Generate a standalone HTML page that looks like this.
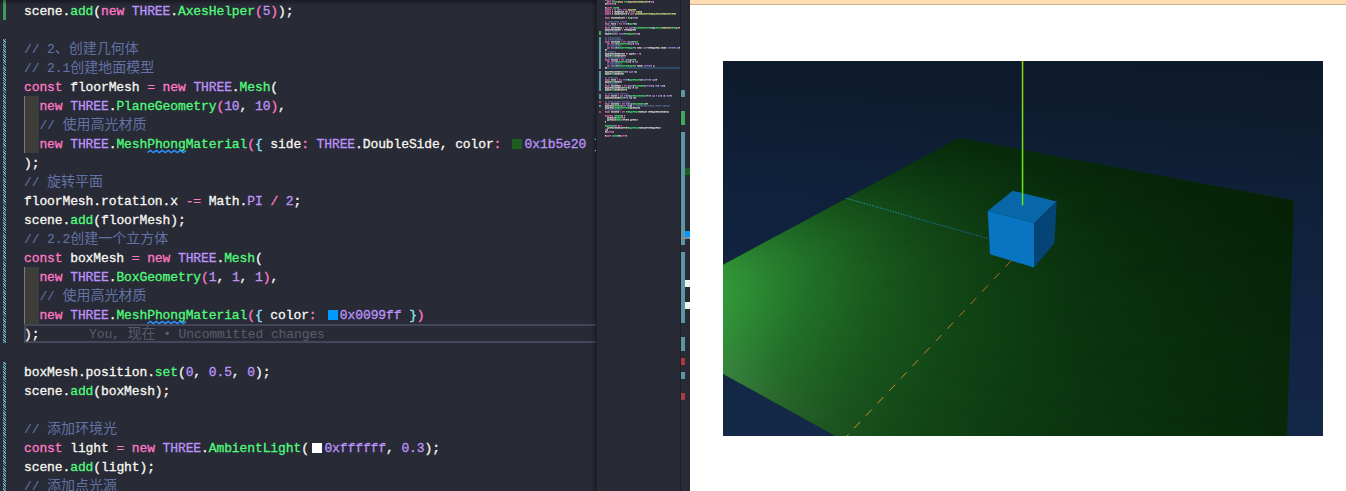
<!DOCTYPE html>
<html lang="zh-CN">
<head>
<meta charset="utf-8">
<title>three.js demo</title>
<style>
html,body{margin:0;padding:0;background:#fff;}
body{width:1346px;height:491px;overflow:hidden;position:relative;}
#ed{position:absolute;left:0;top:0;width:690px;height:491px;background:#282a36;overflow:hidden;}
#code{position:absolute;left:0;top:0;width:596px;height:491px;overflow:hidden;}
.ln{position:absolute;left:24px;height:19px;line-height:19px;white-space:pre;
  font-family:"Liberation Mono","Noto Sans CJK SC",monospace;font-size:13px;letter-spacing:-0.105px;color:#f8f8f2;-webkit-text-stroke:0.3px;}
.z{font-family:"Liberation Mono","Noto Sans CJK SC",monospace;font-size:14px;letter-spacing:0;line-height:0;-webkit-text-stroke:0;}
.w{color:#f8f8f2}.k{color:#ff79c6}.p{color:#bd93f9}.g{color:#50fa7b}.c{color:#6272a4;-webkit-text-stroke:0.12px}.y{color:#f1fa8c}.b{color:#8be9fd}
.sw{display:inline-block;width:10px;height:10px;margin:0 2.3px 0 3.3px;vertical-align:-1px;}
.sq{position:relative}.sq svg{position:absolute;left:0;top:13px;overflow:visible}
.bl{position:absolute;top:0;color:#5a5b67;-webkit-text-stroke:0.1px}
.abs{position:absolute;}
#scene{position:absolute;left:723px;top:61px;width:600px;height:375px;}
</style>
</head>
<body>
<div id="ed">
  <div id="code">
    <!-- indent-rainbow blocks -->
    <div class="abs" style="left:24px;top:96px;width:15px;height:57px;background:#3d3e39;border-left:1px solid #7d7c6c;box-sizing:border-box"></div>
    <div class="abs" style="left:24px;top:267px;width:15px;height:57px;background:#3d3e39;border-left:1px solid #7d7c6c;box-sizing:border-box"></div>
    <!-- current line -->
    <div class="abs" style="left:24px;top:324px;width:580px;height:19px;border:2px solid #44475a;box-sizing:border-box"></div>
    <!-- git gutter -->
    <div class="abs" style="left:3px;top:0;width:3px;height:20px;background:#3e9b57"></div>
    <div class="abs" style="left:0;top:0;width:596px;height:5px;background:linear-gradient(to bottom,rgba(0,0,0,.38),rgba(0,0,0,0))"></div>
    <div class="abs" style="left:3px;top:39px;width:3px;height:304px;background:repeating-linear-gradient(45deg,#66aebb 0 1.05px,#2d3a46 1.05px 1.8px)"></div>
    <div class="abs" style="left:3px;top:362px;width:3px;height:130px;background:repeating-linear-gradient(45deg,#66aebb 0 1.05px,#2d3a46 1.05px 1.8px)"></div>
<div class="ln" style="top:2px"><span class="w">scene</span><span class="w">.</span><span class="g">add</span><span class="w">(</span><span class="k">new</span> <span class="p">THREE</span><span class="w">.</span><span class="g">AxesHelper</span><span class="k">(</span><span class="p">5</span><span class="k">)</span><span class="w">)</span><span class="w">;</span></div>
<div class="ln" style="top:21px"></div>
<div class="ln" style="top:40px"><span class="c">// 2<span class="z">、创建几何体</span></span></div>
<div class="ln" style="top:59px"><span class="c">// 2.1<span class="z">创建地面模型</span></span></div>
<div class="ln" style="top:78px"><span class="k">const</span> <span class="w">floorMesh</span> <span class="k">=</span> <span class="k">new</span> <span class="p">THREE</span><span class="w">.</span><span class="g">Mesh</span><span class="w">(</span></div>
<div class="ln" style="top:97px">  <span class="k">new</span> <span class="p">THREE</span><span class="w">.</span><span class="g">PlaneGeometry</span><span class="k">(</span><span class="p">10</span><span class="w">,</span> <span class="p">10</span><span class="k">)</span><span class="w">,</span></div>
<div class="ln" style="top:116px">  <span class="c">// <span class="z">使用高光材质</span></span></div>
<div class="ln" style="top:135px">  <span class="k">new</span> <span class="p">THREE</span><span class="w">.</span><span class="g">Mesh<span class="sq">Phong<svg width="39" height="3" viewBox="0 0 39 3"><polyline points="0.3,2.6 3.3,0.4 6.3,2.6 9.3,0.4 12.3,2.6 15.3,0.4 18.3,2.6 21.3,0.4 24.3,2.6 27.3,0.4 30.3,2.6 33.3,0.4 36.3,2.6 39.3,0.4" fill="none" stroke="#2b96ff" stroke-width="1.25"/></svg></span>Material</span><span class="k">(</span><span class="b">{</span> <span class="w">side</span><span class="k">:</span> <span class="p">THREE</span><span class="w">.</span><span class="w">DoubleSide</span><span class="w">,</span> <span class="w">color</span><span class="k">:</span> <i class="sw" style="background:#1b5e20"></i><span class="p">0x1b5e20</span> <span class="b">}</span><span class="k">)</span><span class="w">,</span></div>
<div class="ln" style="top:154px"><span class="w">)</span><span class="w">;</span></div>
<div class="ln" style="top:173px"><span class="c">// <span class="z">旋转平面</span></span></div>
<div class="ln" style="top:192px"><span class="w">floorMesh</span><span class="w">.</span><span class="w">rotation</span><span class="w">.</span><span class="w">x</span> <span class="k">-=</span> <span class="w">Math</span><span class="w">.</span><span class="p">PI</span> <span class="k">/</span> <span class="p">2</span><span class="w">;</span></div>
<div class="ln" style="top:211px"><span class="w">scene</span><span class="w">.</span><span class="g">add</span><span class="w">(</span><span class="w">floorMesh</span><span class="w">)</span><span class="w">;</span></div>
<div class="ln" style="top:230px"><span class="c">// 2.2<span class="z">创建一个立方体</span></span></div>
<div class="ln" style="top:249px"><span class="k">const</span> <span class="w">boxMesh</span> <span class="k">=</span> <span class="k">new</span> <span class="p">THREE</span><span class="w">.</span><span class="g">Mesh</span><span class="w">(</span></div>
<div class="ln" style="top:268px">  <span class="k">new</span> <span class="p">THREE</span><span class="w">.</span><span class="g">BoxGeometry</span><span class="k">(</span><span class="p">1</span><span class="w">,</span> <span class="p">1</span><span class="w">,</span> <span class="p">1</span><span class="k">)</span><span class="w">,</span></div>
<div class="ln" style="top:287px">  <span class="c">// <span class="z">使用高光材质</span></span></div>
<div class="ln" style="top:306px">  <span class="k">new</span> <span class="p">THREE</span><span class="w">.</span><span class="g">Mesh<span class="sq">Phong<svg width="39" height="3" viewBox="0 0 39 3"><polyline points="0.3,2.6 3.3,0.4 6.3,2.6 9.3,0.4 12.3,2.6 15.3,0.4 18.3,2.6 21.3,0.4 24.3,2.6 27.3,0.4 30.3,2.6 33.3,0.4 36.3,2.6 39.3,0.4" fill="none" stroke="#2b96ff" stroke-width="1.25"/></svg></span>Material</span><span class="k">(</span><span class="b">{</span> <span class="w">color</span><span class="k">:</span> <i class="sw" style="background:#0099ff"></i><span class="p">0x0099ff</span> <span class="b">}</span><span class="k">)</span></div>
<div class="ln" style="top:325px"><span class="w">)</span><span class="w">;</span><span class="bl" style="left:65.0px">You, <span class="z">现在</span> • Uncommitted changes</span></div>
<div class="ln" style="top:344px"></div>
<div class="ln" style="top:363px"><span class="w">boxMesh</span><span class="w">.</span><span class="w">position</span><span class="w">.</span><span class="g">set</span><span class="w">(</span><span class="p">0</span><span class="w">,</span> <span class="p">0.5</span><span class="w">,</span> <span class="p">0</span><span class="w">)</span><span class="w">;</span></div>
<div class="ln" style="top:382px"><span class="w">scene</span><span class="w">.</span><span class="g">add</span><span class="w">(</span><span class="w">boxMesh</span><span class="w">)</span><span class="w">;</span></div>
<div class="ln" style="top:401px"></div>
<div class="ln" style="top:420px"><span class="c">// <span class="z">添加环境光</span></span></div>
<div class="ln" style="top:439px"><span class="k">const</span> <span class="w">light</span> <span class="k">=</span> <span class="k">new</span> <span class="p">THREE</span><span class="w">.</span><span class="g">AmbientLight</span><span class="w">(</span><i class="sw" style="background:#ffffff"></i><span class="p">0xffffff</span><span class="w">,</span> <span class="p">0.3</span><span class="w">)</span><span class="w">;</span></div>
<div class="ln" style="top:458px"><span class="w">scene</span><span class="w">.</span><span class="g">add</span><span class="w">(</span><span class="w">light</span><span class="w">)</span><span class="w">;</span></div>
<div class="ln" style="top:477px"><span class="c">// <span class="z">添加点光源</span></span></div>
  </div>
  <!-- minimap -->
  <div class="abs" style="left:591px;top:0;width:6px;height:491px;background:linear-gradient(to right,rgba(0,0,0,0),rgba(0,0,0,.32))"></div>
  <div class="abs" style="left:605px;top:67px;width:75px;height:2px;background:#2f4a63"></div>
  <svg class="abs" style="left:597px;top:0" width="83" height="491" viewBox="0 0 83 491" shape-rendering="crispEdges">
    <defs><pattern id="mp" width="23" height="2" patternUnits="userSpaceOnUse"><rect x="0" y="0" width="1" height="1" fill="#717171"/><rect x="0" y="1" width="1" height="1" fill="#9d9d9d"/><rect x="1" y="0" width="1" height="1" fill="#979797"/><rect x="1" y="1" width="1" height="1" fill="#949494"/><rect x="2" y="0" width="1" height="1" fill="#898989"/><rect x="2" y="1" width="1" height="1" fill="#b6b6b6"/><rect x="3" y="0" width="1" height="1" fill="#535353"/><rect x="3" y="1" width="1" height="1" fill="#c6c6c6"/><rect x="4" y="0" width="1" height="1" fill="#505050"/><rect x="4" y="1" width="1" height="1" fill="#bebebe"/><rect x="5" y="0" width="1" height="1" fill="#545454"/><rect x="5" y="1" width="1" height="1" fill="#969696"/><rect x="6" y="0" width="1" height="1" fill="#7d7d7d"/><rect x="6" y="1" width="1" height="1" fill="#ebebeb"/><rect x="7" y="0" width="1" height="1" fill="#5a5a5a"/><rect x="7" y="1" width="1" height="1" fill="#a5a5a5"/><rect x="8" y="0" width="1" height="1" fill="#949494"/><rect x="8" y="1" width="1" height="1" fill="#f8f8f8"/><rect x="9" y="0" width="1" height="1" fill="#8e8e8e"/><rect x="9" y="1" width="1" height="1" fill="#b9b9b9"/><rect x="10" y="0" width="1" height="1" fill="#bcbcbc"/><rect x="10" y="1" width="1" height="1" fill="#919191"/><rect x="11" y="0" width="1" height="1" fill="#afafaf"/><rect x="11" y="1" width="1" height="1" fill="#adadad"/><rect x="12" y="0" width="1" height="1" fill="#5d5d5d"/><rect x="12" y="1" width="1" height="1" fill="#999999"/><rect x="13" y="0" width="1" height="1" fill="#6f6f6f"/><rect x="13" y="1" width="1" height="1" fill="#e9e9e9"/><rect x="14" y="0" width="1" height="1" fill="#616161"/><rect x="14" y="1" width="1" height="1" fill="#cecece"/><rect x="15" y="0" width="1" height="1" fill="#959595"/><rect x="15" y="1" width="1" height="1" fill="#b6b6b6"/><rect x="16" y="0" width="1" height="1" fill="#8b8b8b"/><rect x="16" y="1" width="1" height="1" fill="#939393"/><rect x="17" y="0" width="1" height="1" fill="#535353"/><rect x="17" y="1" width="1" height="1" fill="#a3a3a3"/><rect x="18" y="0" width="1" height="1" fill="#9a9a9a"/><rect x="18" y="1" width="1" height="1" fill="#bdbdbd"/><rect x="19" y="0" width="1" height="1" fill="#707070"/><rect x="19" y="1" width="1" height="1" fill="#cfcfcf"/><rect x="20" y="0" width="1" height="1" fill="#808080"/><rect x="20" y="1" width="1" height="1" fill="#aeaeae"/><rect x="21" y="0" width="1" height="1" fill="#a7a7a7"/><rect x="21" y="1" width="1" height="1" fill="#dcdcdc"/><rect x="22" y="0" width="1" height="1" fill="#686868"/><rect x="22" y="1" width="1" height="1" fill="#cecece"/></pattern><mask id="mk"><rect width="83" height="491" fill="url(#mp)"/></mask></defs><g mask="url(#mk)" opacity="0.8"><rect x="8" y="-1" width="1" height="2" fill="#f8f8f2"/><rect x="9" y="-1" width="8" height="2" fill="#ff79c6"/><rect x="17" y="-1" width="1" height="2" fill="#f8f8f2"/><rect x="10" y="1" width="1" height="2" fill="#f8f8f2"/><rect x="11" y="1" width="3" height="2" fill="#ff79c6"/><rect x="15" y="1" width="5" height="2" fill="#50fa7b"/><rect x="20" y="1" width="1" height="2" fill="#ff79c6"/><rect x="21" y="1" width="5" height="2" fill="#f1fa8c"/><rect x="27" y="1" width="3" height="2" fill="#50fa7b"/><rect x="30" y="1" width="1" height="2" fill="#ff79c6"/><rect x="31" y="1" width="19" height="2" fill="#f1fa8c"/><rect x="50" y="1" width="3" height="2" fill="#f8f8f2"/><rect x="53" y="1" width="3" height="2" fill="#ff79c6"/><rect x="56" y="1" width="1" height="2" fill="#f8f8f2"/><rect x="8" y="3" width="2" height="2" fill="#f8f8f2"/><rect x="10" y="3" width="8" height="2" fill="#ff79c6"/><rect x="18" y="3" width="1" height="2" fill="#f8f8f2"/><rect x="8" y="7" width="1" height="2" fill="#f8f8f2"/><rect x="9" y="7" width="6" height="2" fill="#ff79c6"/><rect x="16" y="7" width="5" height="2" fill="#50fa7b"/><rect x="21" y="7" width="1" height="2" fill="#f8f8f2"/><rect x="8" y="9" width="6" height="2" fill="#ff79c6"/><rect x="15" y="9" width="1" height="2" fill="#ff79c6"/><rect x="17" y="9" width="2" height="2" fill="#ff79c6"/><rect x="20" y="9" width="5" height="2" fill="#bd93f9"/><rect x="26" y="9" width="4" height="2" fill="#ff79c6"/><rect x="31" y="9" width="7" height="2" fill="#f1fa8c"/><rect x="38" y="9" width="1" height="2" fill="#f8f8f2"/><rect x="8" y="11" width="6" height="2" fill="#ff79c6"/><rect x="15" y="11" width="1" height="2" fill="#f8f8f2"/><rect x="17" y="11" width="10" height="2" fill="#f8f8f2"/><rect x="28" y="11" width="3" height="2" fill="#f8f8f2"/><rect x="32" y="11" width="1" height="2" fill="#f8f8f2"/><rect x="34" y="11" width="4" height="2" fill="#ff79c6"/><rect x="39" y="11" width="5" height="2" fill="#f1fa8c"/><rect x="44" y="11" width="1" height="2" fill="#f8f8f2"/><rect x="8" y="13" width="6" height="2" fill="#ff79c6"/><rect x="15" y="13" width="1" height="2" fill="#f8f8f2"/><rect x="17" y="13" width="13" height="2" fill="#f8f8f2"/><rect x="31" y="13" width="1" height="2" fill="#f8f8f2"/><rect x="33" y="13" width="4" height="2" fill="#ff79c6"/><rect x="38" y="13" width="40" height="2" fill="#f1fa8c"/><rect x="78" y="13" width="1" height="2" fill="#f8f8f2"/><rect x="8" y="17" width="5" height="2" fill="#ff79c6"/><rect x="14" y="17" width="14" height="2" fill="#f8f8f2"/><rect x="29" y="17" width="1" height="2" fill="#ff79c6"/><rect x="31" y="17" width="3" height="2" fill="#50fa7b"/><rect x="34" y="17" width="1" height="2" fill="#f8f8f2"/><rect x="35" y="17" width="4" height="2" fill="#bd93f9"/><rect x="39" y="17" width="2" height="2" fill="#f8f8f2"/><rect x="8" y="21" width="2" height="2" fill="#6272a4"/><rect x="11" y="21" width="11" height="2" fill="#6272a4"/><rect x="23" y="21" width="7" height="2" fill="#6272a4"/><rect x="8" y="23" width="5" height="2" fill="#ff79c6"/><rect x="14" y="23" width="5" height="2" fill="#f8f8f2"/><rect x="20" y="23" width="1" height="2" fill="#ff79c6"/><rect x="22" y="23" width="3" height="2" fill="#ff79c6"/><rect x="26" y="23" width="5" height="2" fill="#bd93f9"/><rect x="31" y="23" width="1" height="2" fill="#f8f8f2"/><rect x="32" y="23" width="5" height="2" fill="#50fa7b"/><rect x="37" y="23" width="3" height="2" fill="#f8f8f2"/><rect x="8" y="25" width="2" height="2" fill="#6272a4"/><rect x="11" y="25" width="3" height="2" fill="#6272a4"/><rect x="15" y="25" width="4" height="2" fill="#6272a4"/><rect x="8" y="27" width="5" height="2" fill="#ff79c6"/><rect x="14" y="27" width="11" height="2" fill="#f8f8f2"/><rect x="26" y="27" width="1" height="2" fill="#ff79c6"/><rect x="28" y="27" width="3" height="2" fill="#ff79c6"/><rect x="32" y="27" width="5" height="2" fill="#bd93f9"/><rect x="37" y="27" width="1" height="2" fill="#f8f8f2"/><rect x="38" y="27" width="17" height="2" fill="#50fa7b"/><rect x="55" y="27" width="3" height="2" fill="#f8f8f2"/><rect x="58" y="27" width="7" height="2" fill="#50fa7b"/><rect x="65" y="27" width="1" height="2" fill="#f8f8f2"/><rect x="66" y="27" width="7" height="2" fill="#f1fa8c"/><rect x="73" y="27" width="2" height="2" fill="#f8f8f2"/><rect x="75" y="27" width="4" height="2" fill="#50fa7b"/><rect x="79" y="27" width="1" height="2" fill="#f8f8f2"/><rect x="80" y="27" width="1" height="2" fill="#ff79c6"/><rect x="81" y="27" width="2" height="2" fill="#f1fa8c"/><rect x="8" y="29" width="16" height="2" fill="#f8f8f2"/><rect x="25" y="29" width="1" height="2" fill="#ff79c6"/><rect x="27" y="29" width="12" height="2" fill="#f8f8f2"/><rect x="8" y="31" width="2" height="2" fill="#6272a4"/><rect x="11" y="31" width="3" height="2" fill="#6272a4"/><rect x="15" y="31" width="6" height="2" fill="#6272a4"/><rect x="8" y="33" width="6" height="2" fill="#f8f8f2"/><rect x="14" y="33" width="3" height="2" fill="#50fa7b"/><rect x="17" y="33" width="1" height="2" fill="#f8f8f2"/><rect x="18" y="33" width="3" height="2" fill="#ff79c6"/><rect x="22" y="33" width="5" height="2" fill="#bd93f9"/><rect x="27" y="33" width="1" height="2" fill="#f8f8f2"/><rect x="28" y="33" width="10" height="2" fill="#50fa7b"/><rect x="38" y="33" width="1" height="2" fill="#ff79c6"/><rect x="39" y="33" width="1" height="2" fill="#bd93f9"/><rect x="40" y="33" width="1" height="2" fill="#ff79c6"/><rect x="41" y="33" width="2" height="2" fill="#f8f8f2"/><rect x="8" y="37" width="2" height="2" fill="#6272a4"/><rect x="11" y="37" width="13" height="2" fill="#6272a4"/><rect x="8" y="39" width="2" height="2" fill="#6272a4"/><rect x="11" y="39" width="15" height="2" fill="#6272a4"/><rect x="8" y="41" width="5" height="2" fill="#ff79c6"/><rect x="14" y="41" width="9" height="2" fill="#f8f8f2"/><rect x="24" y="41" width="1" height="2" fill="#ff79c6"/><rect x="26" y="41" width="3" height="2" fill="#ff79c6"/><rect x="30" y="41" width="5" height="2" fill="#bd93f9"/><rect x="35" y="41" width="1" height="2" fill="#f8f8f2"/><rect x="36" y="41" width="4" height="2" fill="#50fa7b"/><rect x="40" y="41" width="1" height="2" fill="#f8f8f2"/><rect x="10" y="43" width="3" height="2" fill="#ff79c6"/><rect x="14" y="43" width="5" height="2" fill="#bd93f9"/><rect x="19" y="43" width="1" height="2" fill="#f8f8f2"/><rect x="20" y="43" width="13" height="2" fill="#50fa7b"/><rect x="33" y="43" width="1" height="2" fill="#ff79c6"/><rect x="34" y="43" width="2" height="2" fill="#bd93f9"/><rect x="36" y="43" width="1" height="2" fill="#f8f8f2"/><rect x="38" y="43" width="2" height="2" fill="#bd93f9"/><rect x="40" y="43" width="1" height="2" fill="#ff79c6"/><rect x="41" y="43" width="1" height="2" fill="#f8f8f2"/><rect x="10" y="45" width="2" height="2" fill="#6272a4"/><rect x="13" y="45" width="12" height="2" fill="#6272a4"/><rect x="10" y="47" width="3" height="2" fill="#ff79c6"/><rect x="14" y="47" width="5" height="2" fill="#bd93f9"/><rect x="19" y="47" width="1" height="2" fill="#f8f8f2"/><rect x="20" y="47" width="17" height="2" fill="#50fa7b"/><rect x="37" y="47" width="1" height="2" fill="#ff79c6"/><rect x="38" y="47" width="1" height="2" fill="#8be9fd"/><rect x="40" y="47" width="4" height="2" fill="#f8f8f2"/><rect x="44" y="47" width="1" height="2" fill="#ff79c6"/><rect x="46" y="47" width="5" height="2" fill="#bd93f9"/><rect x="51" y="47" width="12" height="2" fill="#f8f8f2"/><rect x="64" y="47" width="5" height="2" fill="#f8f8f2"/><rect x="69" y="47" width="1" height="2" fill="#ff79c6"/><rect x="71" y="47" width="8" height="2" fill="#bd93f9"/><rect x="80" y="47" width="1" height="2" fill="#8be9fd"/><rect x="81" y="47" width="1" height="2" fill="#ff79c6"/><rect x="82" y="47" width="1" height="2" fill="#f8f8f2"/><rect x="8" y="49" width="2" height="2" fill="#f8f8f2"/><rect x="8" y="51" width="2" height="2" fill="#6272a4"/><rect x="11" y="51" width="8" height="2" fill="#6272a4"/><rect x="8" y="53" width="20" height="2" fill="#f8f8f2"/><rect x="29" y="53" width="2" height="2" fill="#ff79c6"/><rect x="32" y="53" width="5" height="2" fill="#f8f8f2"/><rect x="37" y="53" width="2" height="2" fill="#bd93f9"/><rect x="40" y="53" width="1" height="2" fill="#ff79c6"/><rect x="42" y="53" width="1" height="2" fill="#bd93f9"/><rect x="43" y="53" width="1" height="2" fill="#f8f8f2"/><rect x="8" y="55" width="6" height="2" fill="#f8f8f2"/><rect x="14" y="55" width="3" height="2" fill="#50fa7b"/><rect x="17" y="55" width="12" height="2" fill="#f8f8f2"/><rect x="8" y="57" width="2" height="2" fill="#6272a4"/><rect x="11" y="57" width="17" height="2" fill="#6272a4"/><rect x="8" y="59" width="5" height="2" fill="#ff79c6"/><rect x="14" y="59" width="7" height="2" fill="#f8f8f2"/><rect x="22" y="59" width="1" height="2" fill="#ff79c6"/><rect x="24" y="59" width="3" height="2" fill="#ff79c6"/><rect x="28" y="59" width="5" height="2" fill="#bd93f9"/><rect x="33" y="59" width="1" height="2" fill="#f8f8f2"/><rect x="34" y="59" width="4" height="2" fill="#50fa7b"/><rect x="38" y="59" width="1" height="2" fill="#f8f8f2"/><rect x="10" y="61" width="3" height="2" fill="#ff79c6"/><rect x="14" y="61" width="5" height="2" fill="#bd93f9"/><rect x="19" y="61" width="1" height="2" fill="#f8f8f2"/><rect x="20" y="61" width="11" height="2" fill="#50fa7b"/><rect x="31" y="61" width="1" height="2" fill="#ff79c6"/><rect x="32" y="61" width="1" height="2" fill="#bd93f9"/><rect x="33" y="61" width="1" height="2" fill="#f8f8f2"/><rect x="35" y="61" width="1" height="2" fill="#bd93f9"/><rect x="36" y="61" width="1" height="2" fill="#f8f8f2"/><rect x="38" y="61" width="1" height="2" fill="#bd93f9"/><rect x="39" y="61" width="1" height="2" fill="#ff79c6"/><rect x="40" y="61" width="1" height="2" fill="#f8f8f2"/><rect x="10" y="63" width="2" height="2" fill="#6272a4"/><rect x="13" y="63" width="12" height="2" fill="#6272a4"/><rect x="10" y="65" width="3" height="2" fill="#ff79c6"/><rect x="14" y="65" width="5" height="2" fill="#bd93f9"/><rect x="19" y="65" width="1" height="2" fill="#f8f8f2"/><rect x="20" y="65" width="17" height="2" fill="#50fa7b"/><rect x="37" y="65" width="1" height="2" fill="#ff79c6"/><rect x="38" y="65" width="1" height="2" fill="#8be9fd"/><rect x="40" y="65" width="5" height="2" fill="#f8f8f2"/><rect x="45" y="65" width="1" height="2" fill="#ff79c6"/><rect x="47" y="65" width="8" height="2" fill="#bd93f9"/><rect x="56" y="65" width="1" height="2" fill="#8be9fd"/><rect x="57" y="65" width="1" height="2" fill="#ff79c6"/><rect x="8" y="67" width="2" height="2" fill="#f8f8f2"/><rect x="8" y="71" width="17" height="2" fill="#f8f8f2"/><rect x="25" y="71" width="3" height="2" fill="#50fa7b"/><rect x="28" y="71" width="1" height="2" fill="#f8f8f2"/><rect x="29" y="71" width="1" height="2" fill="#bd93f9"/><rect x="30" y="71" width="1" height="2" fill="#f8f8f2"/><rect x="32" y="71" width="3" height="2" fill="#bd93f9"/><rect x="35" y="71" width="1" height="2" fill="#f8f8f2"/><rect x="37" y="71" width="1" height="2" fill="#bd93f9"/><rect x="38" y="71" width="2" height="2" fill="#f8f8f2"/><rect x="8" y="73" width="6" height="2" fill="#f8f8f2"/><rect x="14" y="73" width="3" height="2" fill="#50fa7b"/><rect x="17" y="73" width="10" height="2" fill="#f8f8f2"/><rect x="8" y="77" width="2" height="2" fill="#6272a4"/><rect x="11" y="77" width="10" height="2" fill="#6272a4"/><rect x="8" y="79" width="5" height="2" fill="#ff79c6"/><rect x="14" y="79" width="5" height="2" fill="#f8f8f2"/><rect x="20" y="79" width="1" height="2" fill="#ff79c6"/><rect x="22" y="79" width="3" height="2" fill="#ff79c6"/><rect x="26" y="79" width="5" height="2" fill="#bd93f9"/><rect x="31" y="79" width="1" height="2" fill="#f8f8f2"/><rect x="32" y="79" width="12" height="2" fill="#50fa7b"/><rect x="44" y="79" width="1" height="2" fill="#f8f8f2"/><rect x="45" y="79" width="8" height="2" fill="#bd93f9"/><rect x="53" y="79" width="1" height="2" fill="#f8f8f2"/><rect x="55" y="79" width="3" height="2" fill="#bd93f9"/><rect x="58" y="79" width="2" height="2" fill="#f8f8f2"/><rect x="8" y="81" width="6" height="2" fill="#f8f8f2"/><rect x="14" y="81" width="3" height="2" fill="#50fa7b"/><rect x="17" y="81" width="8" height="2" fill="#f8f8f2"/><rect x="8" y="83" width="2" height="2" fill="#6272a4"/><rect x="11" y="83" width="10" height="2" fill="#6272a4"/><rect x="8" y="85" width="5" height="2" fill="#ff79c6"/><rect x="14" y="85" width="10" height="2" fill="#f8f8f2"/><rect x="25" y="85" width="1" height="2" fill="#ff79c6"/><rect x="27" y="85" width="3" height="2" fill="#ff79c6"/><rect x="31" y="85" width="5" height="2" fill="#bd93f9"/><rect x="36" y="85" width="1" height="2" fill="#f8f8f2"/><rect x="37" y="85" width="10" height="2" fill="#50fa7b"/><rect x="47" y="85" width="1" height="2" fill="#f8f8f2"/><rect x="48" y="85" width="8" height="2" fill="#bd93f9"/><rect x="56" y="85" width="1" height="2" fill="#f8f8f2"/><rect x="58" y="85" width="3" height="2" fill="#bd93f9"/><rect x="61" y="85" width="1" height="2" fill="#f8f8f2"/><rect x="63" y="85" width="3" height="2" fill="#bd93f9"/><rect x="66" y="85" width="2" height="2" fill="#f8f8f2"/><rect x="8" y="87" width="20" height="2" fill="#f8f8f2"/><rect x="28" y="87" width="3" height="2" fill="#50fa7b"/><rect x="31" y="87" width="1" height="2" fill="#f8f8f2"/><rect x="32" y="87" width="1" height="2" fill="#bd93f9"/><rect x="33" y="87" width="1" height="2" fill="#f8f8f2"/><rect x="35" y="87" width="1" height="2" fill="#bd93f9"/><rect x="36" y="87" width="1" height="2" fill="#f8f8f2"/><rect x="38" y="87" width="1" height="2" fill="#bd93f9"/><rect x="39" y="87" width="2" height="2" fill="#f8f8f2"/><rect x="8" y="89" width="6" height="2" fill="#f8f8f2"/><rect x="14" y="89" width="3" height="2" fill="#50fa7b"/><rect x="17" y="89" width="13" height="2" fill="#f8f8f2"/><rect x="8" y="93" width="2" height="2" fill="#6272a4"/><rect x="11" y="93" width="11" height="2" fill="#6272a4"/><rect x="23" y="93" width="8" height="2" fill="#6272a4"/><rect x="8" y="95" width="5" height="2" fill="#ff79c6"/><rect x="14" y="95" width="6" height="2" fill="#f8f8f2"/><rect x="21" y="95" width="1" height="2" fill="#ff79c6"/><rect x="23" y="95" width="3" height="2" fill="#ff79c6"/><rect x="27" y="95" width="5" height="2" fill="#bd93f9"/><rect x="32" y="95" width="1" height="2" fill="#f8f8f2"/><rect x="33" y="95" width="17" height="2" fill="#50fa7b"/><rect x="50" y="95" width="1" height="2" fill="#f8f8f2"/><rect x="51" y="95" width="2" height="2" fill="#bd93f9"/><rect x="53" y="95" width="1" height="2" fill="#f8f8f2"/><rect x="55" y="95" width="3" height="2" fill="#bd93f9"/><rect x="59" y="95" width="1" height="2" fill="#ff79c6"/><rect x="61" y="95" width="3" height="2" fill="#bd93f9"/><rect x="64" y="95" width="1" height="2" fill="#f8f8f2"/><rect x="66" y="95" width="1" height="2" fill="#bd93f9"/><rect x="67" y="95" width="1" height="2" fill="#f8f8f2"/><rect x="69" y="95" width="4" height="2" fill="#bd93f9"/><rect x="73" y="95" width="2" height="2" fill="#f8f8f2"/><rect x="8" y="97" width="16" height="2" fill="#f8f8f2"/><rect x="24" y="97" width="3" height="2" fill="#50fa7b"/><rect x="27" y="97" width="1" height="2" fill="#f8f8f2"/><rect x="28" y="97" width="2" height="2" fill="#bd93f9"/><rect x="30" y="97" width="1" height="2" fill="#f8f8f2"/><rect x="32" y="97" width="2" height="2" fill="#bd93f9"/><rect x="34" y="97" width="1" height="2" fill="#f8f8f2"/><rect x="36" y="97" width="1" height="2" fill="#bd93f9"/><rect x="37" y="97" width="2" height="2" fill="#f8f8f2"/><rect x="8" y="101" width="2" height="2" fill="#6272a4"/><rect x="11" y="101" width="13" height="2" fill="#6272a4"/><rect x="25" y="101" width="8" height="2" fill="#6272a4"/><rect x="8" y="103" width="5" height="2" fill="#ff79c6"/><rect x="14" y="103" width="8" height="2" fill="#f8f8f2"/><rect x="23" y="103" width="1" height="2" fill="#ff79c6"/><rect x="25" y="103" width="3" height="2" fill="#ff79c6"/><rect x="29" y="103" width="5" height="2" fill="#bd93f9"/><rect x="34" y="103" width="1" height="2" fill="#f8f8f2"/><rect x="35" y="103" width="13" height="2" fill="#50fa7b"/><rect x="48" y="103" width="3" height="2" fill="#f8f8f2"/><rect x="8" y="105" width="9" height="2" fill="#f8f8f2"/><rect x="17" y="105" width="7" height="2" fill="#50fa7b"/><rect x="24" y="105" width="1" height="2" fill="#f8f8f2"/><rect x="25" y="105" width="3" height="2" fill="#bd93f9"/><rect x="28" y="105" width="1" height="2" fill="#f8f8f2"/><rect x="30" y="105" width="3" height="2" fill="#bd93f9"/><rect x="33" y="105" width="2" height="2" fill="#f8f8f2"/><rect x="36" y="105" width="2" height="2" fill="#6272a4"/><rect x="39" y="105" width="18" height="2" fill="#6272a4"/><rect x="58" y="105" width="7" height="2" fill="#6272a4"/><rect x="66" y="105" width="7" height="2" fill="#6272a4"/><rect x="8" y="107" width="9" height="2" fill="#f8f8f2"/><rect x="17" y="107" width="16" height="2" fill="#50fa7b"/><rect x="33" y="107" width="10" height="2" fill="#f8f8f2"/><rect x="8" y="109" width="2" height="2" fill="#6272a4"/><rect x="11" y="109" width="13" height="2" fill="#6272a4"/><rect x="8" y="111" width="5" height="2" fill="#ff79c6"/><rect x="14" y="111" width="8" height="2" fill="#f8f8f2"/><rect x="23" y="111" width="1" height="2" fill="#ff79c6"/><rect x="25" y="111" width="3" height="2" fill="#ff79c6"/><rect x="29" y="111" width="13" height="2" fill="#50fa7b"/><rect x="42" y="111" width="8" height="2" fill="#f8f8f2"/><rect x="51" y="111" width="21" height="2" fill="#f8f8f2"/><rect x="8" y="115" width="8" height="2" fill="#ff79c6"/><rect x="17" y="115" width="7" height="2" fill="#50fa7b"/><rect x="24" y="115" width="2" height="2" fill="#f8f8f2"/><rect x="27" y="115" width="1" height="2" fill="#f8f8f2"/><rect x="10" y="117" width="9" height="2" fill="#f8f8f2"/><rect x="19" y="117" width="6" height="2" fill="#50fa7b"/><rect x="25" y="117" width="2" height="2" fill="#ff79c6"/><rect x="27" y="117" width="1" height="2" fill="#f8f8f2"/><rect x="10" y="119" width="9" height="2" fill="#f8f8f2"/><rect x="19" y="119" width="6" height="2" fill="#50fa7b"/><rect x="25" y="119" width="1" height="2" fill="#ff79c6"/><rect x="26" y="119" width="6" height="2" fill="#f8f8f2"/><rect x="33" y="119" width="6" height="2" fill="#f8f8f2"/><rect x="39" y="119" width="1" height="2" fill="#ff79c6"/><rect x="40" y="119" width="1" height="2" fill="#f8f8f2"/><rect x="8" y="121" width="1" height="2" fill="#f8f8f2"/><rect x="8" y="125" width="9" height="2" fill="#50fa7b"/><rect x="17" y="125" width="1" height="2" fill="#f8f8f2"/><rect x="18" y="125" width="2" height="2" fill="#ff79c6"/><rect x="21" y="125" width="2" height="2" fill="#ff79c6"/><rect x="24" y="125" width="1" height="2" fill="#ff79c6"/><rect x="10" y="127" width="21" height="2" fill="#f8f8f2"/><rect x="31" y="127" width="11" height="2" fill="#50fa7b"/><rect x="42" y="127" width="1" height="2" fill="#8be9fd"/><rect x="43" y="127" width="19" height="2" fill="#f8f8f2"/><rect x="62" y="127" width="1" height="2" fill="#8be9fd"/><rect x="63" y="127" width="1" height="2" fill="#f8f8f2"/><rect x="8" y="129" width="1" height="2" fill="#ff79c6"/><rect x="9" y="129" width="2" height="2" fill="#f8f8f2"/><rect x="8" y="131" width="2" height="2" fill="#f8f8f2"/><rect x="10" y="131" width="6" height="2" fill="#ff79c6"/><rect x="16" y="131" width="1" height="2" fill="#f8f8f2"/><rect x="8" y="135" width="1" height="2" fill="#f8f8f2"/><rect x="9" y="135" width="5" height="2" fill="#ff79c6"/><rect x="15" y="135" width="6" height="2" fill="#50fa7b"/><rect x="21" y="135" width="3" height="2" fill="#f8f8f2"/><rect x="24" y="135" width="5" height="2" fill="#ff79c6"/><rect x="29" y="135" width="1" height="2" fill="#f8f8f2"/></g>
    <g>
      <rect x="2" y="31" width="2" height="4" fill="#3fa75a"/>
      <rect x="2" y="37" width="2" height="32" fill="#5a96a4"/>
      <rect x="2" y="71" width="2" height="20" fill="#5a96a4"/>
      <rect x="2" y="94" width="2" height="5" fill="#5a96a4"/>
      <rect x="2" y="101" width="2" height="2" fill="#c04040"/>
      <rect x="2" y="105" width="2" height="2" fill="#5a96a4"/>
      <rect x="2" y="111" width="2" height="2" fill="#c04040"/>
    </g>
  </svg>
  <!-- overview ruler -->
  <div class="abs" style="left:680px;top:0;width:1px;height:491px;background:#1e1f29"></div>
  <div class="abs" style="left:681px;top:90px;width:4px;height:7px;background:#5a96a4"></div>
  <div class="abs" style="left:681px;top:111px;width:4px;height:14px;background:#3fa75a"></div>
  <div class="abs" style="left:681px;top:132px;width:4px;height:113px;background:#5a96a4"></div>
  <div class="abs" style="left:685px;top:168px;width:5px;height:7px;background:#1b5e20"></div>
  <div class="abs" style="left:685px;top:231px;width:5px;height:6px;background:#0099ff"></div>
  <div class="abs" style="left:681px;top:237px;width:9px;height:2px;background:#8a8d98"></div>
  <div class="abs" style="left:681px;top:252px;width:4px;height:71px;background:#5a96a4"></div>
  <div class="abs" style="left:685px;top:280px;width:5px;height:7px;background:#f4f4ec"></div>
  <div class="abs" style="left:685px;top:302px;width:5px;height:7px;background:#f4f4ec"></div>
  <div class="abs" style="left:681px;top:337px;width:4px;height:14px;background:#5a96a4"></div>
  <div class="abs" style="left:681px;top:358px;width:4px;height:7px;background:#a83a44"></div>
  <div class="abs" style="left:681px;top:372px;width:4px;height:7px;background:#5a96a4"></div>
  <div class="abs" style="left:681px;top:393px;width:4px;height:7px;background:#a83a44"></div>
</div>
<!-- right: browser -->
<div class="abs" style="left:690px;top:0;width:656px;height:4px;background:#ffdeb4;border-bottom:1px solid #cdb28c"></div>
<svg id="scene" width="600" height="375" viewBox="0 0 600 375">
  <defs>
    <linearGradient id="bgg" gradientUnits="userSpaceOnUse" x1="312" y1="0" x2="288" y2="375">
      <stop offset="0" stop-color="#0c1a2b"/>
      <stop offset="0.1" stop-color="#0d1b2d"/>
      <stop offset="0.32" stop-color="#0f2039"/>
      <stop offset="0.47" stop-color="#10223e"/>
      <stop offset="1" stop-color="#142848"/>
    </linearGradient>
    <linearGradient id="yax" x1="0" y1="0" x2="0" y2="1"><stop offset="0" stop-color="#8cd70a"/><stop offset="1" stop-color="#62e61e"/></linearGradient>
    <linearGradient id="zax" gradientUnits="userSpaceOnUse" x1="123" y1="137" x2="265" y2="178"><stop offset="0" stop-color="#25add8"/><stop offset="1" stop-color="#1570d2"/></linearGradient>
    <linearGradient id="xax" gradientUnits="userSpaceOnUse" x1="288" y1="200" x2="124" y2="375"><stop offset="0" stop-color="#bb661c"/><stop offset="1" stop-color="#d6a026"/></linearGradient>
    <clipPath id="fc"><polygon points="0,203.7 236,77 570.8,139.6 564,375 112.6,375 0,313"/></clipPath>
<linearGradient id="f0" gradientUnits="userSpaceOnUse" x1="231" y1="0" x2="249" y2="0"><stop offset="0" stop-color="#072a0a"/><stop offset="1" stop-color="#07290a"/></linearGradient><linearGradient id="f1" gradientUnits="userSpaceOnUse" x1="222" y1="0" x2="275" y2="0"><stop offset="0" stop-color="#082b0a"/><stop offset="1" stop-color="#072909"/></linearGradient><linearGradient id="f2" gradientUnits="userSpaceOnUse" x1="213" y1="0" x2="302" y2="0"><stop offset="0" stop-color="#092e0b"/><stop offset="1" stop-color="#072809"/></linearGradient><linearGradient id="f3" gradientUnits="userSpaceOnUse" x1="203" y1="0" x2="328" y2="0"><stop offset="0" stop-color="#09300c"/><stop offset="1" stop-color="#072809"/></linearGradient><linearGradient id="f4" gradientUnits="userSpaceOnUse" x1="194" y1="0" x2="355" y2="0"><stop offset="0" stop-color="#0a320d"/><stop offset="1" stop-color="#072709"/></linearGradient><linearGradient id="f5" gradientUnits="userSpaceOnUse" x1="185" y1="0" x2="382" y2="0"><stop offset="0" stop-color="#0b350e"/><stop offset="0.959" stop-color="#062608"/><stop offset="1" stop-color="#062608"/></linearGradient><linearGradient id="f6" gradientUnits="userSpaceOnUse" x1="175" y1="0" x2="408" y2="0"><stop offset="0" stop-color="#0c3810"/><stop offset="0.863" stop-color="#062608"/><stop offset="1" stop-color="#062508"/></linearGradient><linearGradient id="f7" gradientUnits="userSpaceOnUse" x1="166" y1="0" x2="435" y2="0"><stop offset="0" stop-color="#0d3a11"/><stop offset="0.725" stop-color="#072809"/><stop offset="1" stop-color="#062408"/></linearGradient><linearGradient id="f8" gradientUnits="userSpaceOnUse" x1="157" y1="0" x2="461" y2="0"><stop offset="0" stop-color="#0f3e12"/><stop offset="0.602" stop-color="#072a0a"/><stop offset="1" stop-color="#062307"/></linearGradient><linearGradient id="f9" gradientUnits="userSpaceOnUse" x1="147" y1="0" x2="488" y2="0"><stop offset="0" stop-color="#104114"/><stop offset="0.528" stop-color="#082c0b"/><stop offset="0.994" stop-color="#052307"/><stop offset="1" stop-color="#052307"/></linearGradient><linearGradient id="f10" gradientUnits="userSpaceOnUse" x1="138" y1="0" x2="515" y2="0"><stop offset="0" stop-color="#114515"/><stop offset="0.469" stop-color="#092e0b"/><stop offset="0.923" stop-color="#052307"/><stop offset="1" stop-color="#052207"/></linearGradient><linearGradient id="f11" gradientUnits="userSpaceOnUse" x1="129" y1="0" x2="541" y2="0"><stop offset="0" stop-color="#134817"/><stop offset="0.408" stop-color="#0a300d"/><stop offset="0.794" stop-color="#062408"/><stop offset="1" stop-color="#052107"/></linearGradient><linearGradient id="f12" gradientUnits="userSpaceOnUse" x1="119" y1="0" x2="568" y2="0"><stop offset="0" stop-color="#144c19"/><stop offset="0.367" stop-color="#0b330e"/><stop offset="0.702" stop-color="#062608"/><stop offset="1" stop-color="#052106"/></linearGradient><linearGradient id="f13" gradientUnits="userSpaceOnUse" x1="110" y1="0" x2="571" y2="0"><stop offset="0" stop-color="#16511a"/><stop offset="0.351" stop-color="#0b350f"/><stop offset="0.657" stop-color="#072809"/><stop offset="1" stop-color="#052106"/></linearGradient><linearGradient id="f14" gradientUnits="userSpaceOnUse" x1="101" y1="0" x2="571" y2="0"><stop offset="0" stop-color="#18551c"/><stop offset="0.332" stop-color="#0d3810"/><stop offset="0.613" stop-color="#072a0a"/><stop offset="1" stop-color="#052106"/></linearGradient><linearGradient id="f15" gradientUnits="userSpaceOnUse" x1="91" y1="0" x2="571" y2="0"><stop offset="0" stop-color="#195a1e"/><stop offset="0.319" stop-color="#0e3b11"/><stop offset="0.581" stop-color="#082c0b"/><stop offset="0.963" stop-color="#052207"/><stop offset="1" stop-color="#052107"/></linearGradient><linearGradient id="f16" gradientUnits="userSpaceOnUse" x1="82" y1="0" x2="571" y2="0"><stop offset="0" stop-color="#1b5e20"/><stop offset="0.307" stop-color="#0f3e12"/><stop offset="0.552" stop-color="#092e0c"/><stop offset="0.902" stop-color="#052307"/><stop offset="1" stop-color="#052207"/></linearGradient><linearGradient id="f17" gradientUnits="userSpaceOnUse" x1="73" y1="0" x2="571" y2="0"><stop offset="0" stop-color="#1d6322"/><stop offset="0.295" stop-color="#104114"/><stop offset="0.524" stop-color="#0a300d"/><stop offset="0.843" stop-color="#062508"/><stop offset="1" stop-color="#052207"/></linearGradient><linearGradient id="f18" gradientUnits="userSpaceOnUse" x1="64" y1="0" x2="570" y2="0"><stop offset="0" stop-color="#1f6925"/><stop offset="0.279" stop-color="#114515"/><stop offset="0.492" stop-color="#0b330e"/><stop offset="0.783" stop-color="#062709"/><stop offset="1" stop-color="#052207"/></linearGradient><linearGradient id="f19" gradientUnits="userSpaceOnUse" x1="54" y1="0" x2="570" y2="0"><stop offset="0" stop-color="#216e27"/><stop offset="0.273" stop-color="#134817"/><stop offset="0.471" stop-color="#0c360f"/><stop offset="0.738" stop-color="#072909"/><stop offset="1" stop-color="#052207"/></linearGradient><linearGradient id="f20" gradientUnits="userSpaceOnUse" x1="45" y1="0" x2="570" y2="0"><stop offset="0" stop-color="#237429"/><stop offset="0.263" stop-color="#144c18"/><stop offset="0.451" stop-color="#0d3910"/><stop offset="0.697" stop-color="#082b0a"/><stop offset="1" stop-color="#052307"/></linearGradient><linearGradient id="f21" gradientUnits="userSpaceOnUse" x1="36" y1="0" x2="570" y2="0"><stop offset="0" stop-color="#267a2c"/><stop offset="0.253" stop-color="#154f1a"/><stop offset="0.433" stop-color="#0e3b11"/><stop offset="0.663" stop-color="#082d0b"/><stop offset="1" stop-color="#052307"/></linearGradient><linearGradient id="f22" gradientUnits="userSpaceOnUse" x1="26" y1="0" x2="570" y2="0"><stop offset="0" stop-color="#287f2e"/><stop offset="0.0551" stop-color="#24762a"/><stop offset="0.237" stop-color="#17551c"/><stop offset="0.403" stop-color="#104013"/><stop offset="0.612" stop-color="#0a300c"/><stop offset="0.921" stop-color="#062508"/><stop offset="1" stop-color="#052307"/></linearGradient><linearGradient id="f23" gradientUnits="userSpaceOnUse" x1="17" y1="0" x2="570" y2="0"><stop offset="0" stop-color="#2a8531"/><stop offset="0.0434" stop-color="#277e2e"/><stop offset="0.228" stop-color="#19591e"/><stop offset="0.385" stop-color="#114315"/><stop offset="0.58" stop-color="#0b330e"/><stop offset="0.863" stop-color="#062608"/><stop offset="1" stop-color="#052307"/></linearGradient><linearGradient id="f24" gradientUnits="userSpaceOnUse" x1="8" y1="0" x2="570" y2="0"><stop offset="0" stop-color="#2c8c33"/><stop offset="0.235" stop-color="#1a5a1e"/><stop offset="0.384" stop-color="#114515"/><stop offset="0.571" stop-color="#0b340e"/><stop offset="0.838" stop-color="#072809"/><stop offset="1" stop-color="#062307"/></linearGradient><linearGradient id="f25" gradientUnits="userSpaceOnUse" x1="0" y1="0" x2="570" y2="0"><stop offset="0" stop-color="#2f9136"/><stop offset="0.221" stop-color="#1c6021"/><stop offset="0.363" stop-color="#134917"/><stop offset="0.537" stop-color="#0c3710"/><stop offset="0.779" stop-color="#072a0a"/><stop offset="1" stop-color="#062407"/></linearGradient><linearGradient id="f26" gradientUnits="userSpaceOnUse" x1="0" y1="0" x2="570" y2="0"><stop offset="0" stop-color="#309437"/><stop offset="0.195" stop-color="#1e6523"/><stop offset="0.332" stop-color="#154d19"/><stop offset="0.5" stop-color="#0e3b11"/><stop offset="0.726" stop-color="#082c0b"/><stop offset="1" stop-color="#062407"/></linearGradient><linearGradient id="f27" gradientUnits="userSpaceOnUse" x1="0" y1="0" x2="570" y2="0"><stop offset="0" stop-color="#309638"/><stop offset="0.179" stop-color="#1f6925"/><stop offset="0.316" stop-color="#16501a"/><stop offset="0.479" stop-color="#0e3d12"/><stop offset="0.7" stop-color="#092e0b"/><stop offset="1" stop-color="#062408"/></linearGradient><linearGradient id="f28" gradientUnits="userSpaceOnUse" x1="0" y1="0" x2="570" y2="0"><stop offset="0" stop-color="#319738"/><stop offset="0.168" stop-color="#206c26"/><stop offset="0.3" stop-color="#17531b"/><stop offset="0.458" stop-color="#0f3f13"/><stop offset="0.668" stop-color="#09300c"/><stop offset="0.984" stop-color="#062508"/><stop offset="1" stop-color="#062408"/></linearGradient><linearGradient id="f29" gradientUnits="userSpaceOnUse" x1="0" y1="0" x2="569" y2="0"><stop offset="0" stop-color="#319839"/><stop offset="0.158" stop-color="#216e27"/><stop offset="0.29" stop-color="#17541c"/><stop offset="0.448" stop-color="#104013"/><stop offset="0.659" stop-color="#0a310d"/><stop offset="0.97" stop-color="#062508"/><stop offset="1" stop-color="#062508"/></linearGradient><linearGradient id="f30" gradientUnits="userSpaceOnUse" x1="0" y1="0" x2="569" y2="0"><stop offset="0" stop-color="#319939"/><stop offset="0.148" stop-color="#227028"/><stop offset="0.274" stop-color="#18571d"/><stop offset="0.427" stop-color="#114314"/><stop offset="0.627" stop-color="#0a330d"/><stop offset="0.923" stop-color="#062708"/><stop offset="1" stop-color="#062508"/></linearGradient><linearGradient id="f31" gradientUnits="userSpaceOnUse" x1="0" y1="0" x2="569" y2="0"><stop offset="0" stop-color="#319939"/><stop offset="0.142" stop-color="#227128"/><stop offset="0.269" stop-color="#19581d"/><stop offset="0.422" stop-color="#114315"/><stop offset="0.622" stop-color="#0b330e"/><stop offset="0.917" stop-color="#072709"/><stop offset="1" stop-color="#062508"/></linearGradient><linearGradient id="f32" gradientUnits="userSpaceOnUse" x1="0" y1="0" x2="569" y2="0"><stop offset="0" stop-color="#319839"/><stop offset="0.137" stop-color="#237229"/><stop offset="0.264" stop-color="#19591e"/><stop offset="0.417" stop-color="#114415"/><stop offset="0.617" stop-color="#0b340e"/><stop offset="0.912" stop-color="#072709"/><stop offset="1" stop-color="#062508"/></linearGradient><linearGradient id="f33" gradientUnits="userSpaceOnUse" x1="0" y1="0" x2="569" y2="0"><stop offset="0" stop-color="#319839"/><stop offset="0.132" stop-color="#237329"/><stop offset="0.258" stop-color="#19591e"/><stop offset="0.411" stop-color="#114415"/><stop offset="0.612" stop-color="#0b340e"/><stop offset="0.907" stop-color="#072809"/><stop offset="1" stop-color="#062508"/></linearGradient><linearGradient id="f34" gradientUnits="userSpaceOnUse" x1="0" y1="0" x2="569" y2="0"><stop offset="0" stop-color="#319739"/><stop offset="0.127" stop-color="#237429"/><stop offset="0.253" stop-color="#195a1e"/><stop offset="0.406" stop-color="#124515"/><stop offset="0.606" stop-color="#0b350e"/><stop offset="0.902" stop-color="#072809"/><stop offset="1" stop-color="#062508"/></linearGradient><linearGradient id="f35" gradientUnits="userSpaceOnUse" x1="0" y1="0" x2="569" y2="0"><stop offset="0" stop-color="#319639"/><stop offset="0.127" stop-color="#237329"/><stop offset="0.253" stop-color="#19591e"/><stop offset="0.406" stop-color="#114515"/><stop offset="0.612" stop-color="#0b340e"/><stop offset="0.912" stop-color="#072809"/><stop offset="1" stop-color="#062608"/></linearGradient><linearGradient id="f36" gradientUnits="userSpaceOnUse" x1="0" y1="0" x2="569" y2="0"><stop offset="0" stop-color="#319438"/><stop offset="0.121" stop-color="#237329"/><stop offset="0.248" stop-color="#195a1e"/><stop offset="0.406" stop-color="#114515"/><stop offset="0.612" stop-color="#0b340e"/><stop offset="0.912" stop-color="#072809"/><stop offset="1" stop-color="#062608"/></linearGradient><linearGradient id="f37" gradientUnits="userSpaceOnUse" x1="0" y1="0" x2="569" y2="0"><stop offset="0" stop-color="#319338"/><stop offset="0.121" stop-color="#237229"/><stop offset="0.253" stop-color="#19591e"/><stop offset="0.411" stop-color="#114415"/><stop offset="0.622" stop-color="#0b340e"/><stop offset="0.933" stop-color="#072809"/><stop offset="1" stop-color="#062608"/></linearGradient><linearGradient id="f38" gradientUnits="userSpaceOnUse" x1="0" y1="0" x2="569" y2="0"><stop offset="0" stop-color="#319238"/><stop offset="0.121" stop-color="#237129"/><stop offset="0.253" stop-color="#19581e"/><stop offset="0.417" stop-color="#114415"/><stop offset="0.633" stop-color="#0b330e"/><stop offset="0.954" stop-color="#072709"/><stop offset="1" stop-color="#062608"/></linearGradient><linearGradient id="f39" gradientUnits="userSpaceOnUse" x1="0" y1="0" x2="569" y2="0"><stop offset="0" stop-color="#319038"/><stop offset="0.121" stop-color="#237028"/><stop offset="0.253" stop-color="#19581d"/><stop offset="0.417" stop-color="#114415"/><stop offset="0.638" stop-color="#0b330e"/><stop offset="0.965" stop-color="#072709"/><stop offset="1" stop-color="#062608"/></linearGradient><linearGradient id="f40" gradientUnits="userSpaceOnUse" x1="0" y1="0" x2="568" y2="0"><stop offset="0" stop-color="#328e38"/><stop offset="0.121" stop-color="#226f28"/><stop offset="0.254" stop-color="#18571d"/><stop offset="0.423" stop-color="#114314"/><stop offset="0.65" stop-color="#0b330e"/><stop offset="0.988" stop-color="#062708"/><stop offset="1" stop-color="#062608"/></linearGradient><linearGradient id="f41" gradientUnits="userSpaceOnUse" x1="0" y1="0" x2="568" y2="0"><stop offset="0" stop-color="#338d39"/><stop offset="0.116" stop-color="#236f28"/><stop offset="0.254" stop-color="#18571d"/><stop offset="0.423" stop-color="#114314"/><stop offset="0.655" stop-color="#0b330d"/><stop offset="0.998" stop-color="#062708"/><stop offset="1" stop-color="#062708"/></linearGradient><linearGradient id="f42" gradientUnits="userSpaceOnUse" x1="0" y1="0" x2="568" y2="0"><stop offset="0" stop-color="#338b39"/><stop offset="0.116" stop-color="#236e28"/><stop offset="0.254" stop-color="#18561d"/><stop offset="0.428" stop-color="#104214"/><stop offset="0.665" stop-color="#0a320d"/><stop offset="1" stop-color="#062708"/></linearGradient><linearGradient id="f43" gradientUnits="userSpaceOnUse" x1="0" y1="0" x2="568" y2="0"><stop offset="0" stop-color="#348a3a"/><stop offset="0.111" stop-color="#236e29"/><stop offset="0.248" stop-color="#18561d"/><stop offset="0.423" stop-color="#114214"/><stop offset="0.66" stop-color="#0a320d"/><stop offset="1" stop-color="#062709"/></linearGradient><linearGradient id="f44" gradientUnits="userSpaceOnUse" x1="0" y1="0" x2="568" y2="0"><stop offset="0" stop-color="#35883b"/><stop offset="0.106" stop-color="#246e29"/><stop offset="0.243" stop-color="#18561d"/><stop offset="0.423" stop-color="#104214"/><stop offset="0.665" stop-color="#0a320d"/><stop offset="1" stop-color="#072709"/></linearGradient><linearGradient id="f45" gradientUnits="userSpaceOnUse" x1="0" y1="0" x2="568" y2="0"><stop offset="0" stop-color="#37873c"/><stop offset="0.1" stop-color="#256e2a"/><stop offset="0.232" stop-color="#19571d"/><stop offset="0.412" stop-color="#114314"/><stop offset="0.655" stop-color="#0b330e"/><stop offset="1" stop-color="#072709"/></linearGradient><linearGradient id="f46" gradientUnits="userSpaceOnUse" x1="0" y1="0" x2="568" y2="0"><stop offset="0" stop-color="#38863d"/><stop offset="0.1" stop-color="#256d2a"/><stop offset="0.222" stop-color="#19581e"/><stop offset="0.401" stop-color="#114415"/><stop offset="0.644" stop-color="#0b330e"/><stop offset="0.998" stop-color="#072709"/><stop offset="1" stop-color="#072709"/></linearGradient><linearGradient id="f47" gradientUnits="userSpaceOnUse" x1="0" y1="0" x2="568" y2="0"><stop offset="0" stop-color="#39843e"/><stop offset="0.0951" stop-color="#266d2b"/><stop offset="0.206" stop-color="#1a5a1f"/><stop offset="0.38" stop-color="#124516"/><stop offset="0.618" stop-color="#0b350e"/><stop offset="0.967" stop-color="#072809"/><stop offset="1" stop-color="#072709"/></linearGradient><linearGradient id="f48" gradientUnits="userSpaceOnUse" x1="0" y1="0" x2="568" y2="0"><stop offset="0" stop-color="#39823e"/><stop offset="0.116" stop-color="#236828"/><stop offset="0.238" stop-color="#18551d"/><stop offset="0.428" stop-color="#104114"/><stop offset="0.692" stop-color="#0a310d"/><stop offset="1" stop-color="#072709"/></linearGradient><linearGradient id="f49" gradientUnits="userSpaceOnUse" x1="9" y1="0" x2="568" y2="0"><stop offset="0" stop-color="#377c3b"/><stop offset="0.113" stop-color="#226527"/><stop offset="0.236" stop-color="#17531c"/><stop offset="0.435" stop-color="#0f4013"/><stop offset="0.714" stop-color="#0a300c"/><stop offset="1" stop-color="#072709"/></linearGradient><linearGradient id="f50" gradientUnits="userSpaceOnUse" x1="17" y1="0" x2="568" y2="0"><stop offset="0" stop-color="#347738"/><stop offset="0.12" stop-color="#206124"/><stop offset="0.256" stop-color="#164f1a"/><stop offset="0.474" stop-color="#0e3c12"/><stop offset="0.779" stop-color="#092e0b"/><stop offset="1" stop-color="#072809"/></linearGradient><linearGradient id="f51" gradientUnits="userSpaceOnUse" x1="26" y1="0" x2="567" y2="0"><stop offset="0" stop-color="#317235"/><stop offset="0.122" stop-color="#1e5d23"/><stop offset="0.266" stop-color="#144c19"/><stop offset="0.505" stop-color="#0d3a11"/><stop offset="0.837" stop-color="#082c0b"/><stop offset="1" stop-color="#072809"/></linearGradient><linearGradient id="f52" gradientUnits="userSpaceOnUse" x1="35" y1="0" x2="567" y2="0"><stop offset="0" stop-color="#2e6e32"/><stop offset="0.118" stop-color="#1d5b22"/><stop offset="0.271" stop-color="#144a18"/><stop offset="0.524" stop-color="#0d3810"/><stop offset="0.885" stop-color="#082a0a"/><stop offset="1" stop-color="#072809"/></linearGradient><linearGradient id="f53" gradientUnits="userSpaceOnUse" x1="44" y1="0" x2="567" y2="0"><stop offset="0" stop-color="#2c6a2f"/><stop offset="0.12" stop-color="#1c5820"/><stop offset="0.293" stop-color="#124616"/><stop offset="0.568" stop-color="#0c350f"/><stop offset="0.964" stop-color="#072909"/><stop offset="1" stop-color="#072809"/></linearGradient><linearGradient id="f54" gradientUnits="userSpaceOnUse" x1="52" y1="0" x2="567" y2="0"><stop offset="0" stop-color="#29662d"/><stop offset="0.134" stop-color="#19541e"/><stop offset="0.338" stop-color="#104214"/><stop offset="0.647" stop-color="#0a320d"/><stop offset="1" stop-color="#072809"/></linearGradient><linearGradient id="f55" gradientUnits="userSpaceOnUse" x1="61" y1="0" x2="567" y2="0"><stop offset="0" stop-color="#27622a"/><stop offset="0.13" stop-color="#19521d"/><stop offset="0.35" stop-color="#104013"/><stop offset="0.676" stop-color="#0a310d"/><stop offset="1" stop-color="#072809"/></linearGradient><linearGradient id="f56" gradientUnits="userSpaceOnUse" x1="70" y1="0" x2="567" y2="0"><stop offset="0" stop-color="#245f28"/><stop offset="0.139" stop-color="#174f1b"/><stop offset="0.386" stop-color="#0f3d12"/><stop offset="0.748" stop-color="#092e0c"/><stop offset="1" stop-color="#072809"/></linearGradient><linearGradient id="f57" gradientUnits="userSpaceOnUse" x1="78" y1="0" x2="567" y2="0"><stop offset="0" stop-color="#225b26"/><stop offset="0.153" stop-color="#154c19"/><stop offset="0.423" stop-color="#0e3a11"/><stop offset="0.816" stop-color="#082c0b"/><stop offset="1" stop-color="#072809"/></linearGradient><linearGradient id="f58" gradientUnits="userSpaceOnUse" x1="87" y1="0" x2="567" y2="0"><stop offset="0" stop-color="#205823"/><stop offset="0.163" stop-color="#144a18"/><stop offset="0.456" stop-color="#0d3810"/><stop offset="0.887" stop-color="#082b0a"/><stop offset="1" stop-color="#072809"/></linearGradient><linearGradient id="f59" gradientUnits="userSpaceOnUse" x1="96" y1="0" x2="567" y2="0"><stop offset="0" stop-color="#1e5622"/><stop offset="0.166" stop-color="#134817"/><stop offset="0.478" stop-color="#0c370f"/><stop offset="0.936" stop-color="#072a0a"/><stop offset="1" stop-color="#072809"/></linearGradient>
  </defs>
  <rect width="600" height="375" fill="url(#bgg)"/>
  <polygon points="0,203.7 236,77 570.8,139.6 564,375 112.6,375 0,313" fill="#09360f"/>
  <g clip-path="url(#fc)" shape-rendering="crispEdges"><rect x="219" y="75" width="42" height="5" fill="url(#f0)"/><rect x="210" y="80" width="77" height="5" fill="url(#f1)"/><rect x="201" y="85" width="113" height="5" fill="url(#f2)"/><rect x="191" y="90" width="149" height="5" fill="url(#f3)"/><rect x="182" y="95" width="185" height="5" fill="url(#f4)"/><rect x="173" y="100" width="221" height="5" fill="url(#f5)"/><rect x="163" y="105" width="257" height="5" fill="url(#f6)"/><rect x="154" y="110" width="293" height="5" fill="url(#f7)"/><rect x="145" y="115" width="328" height="5" fill="url(#f8)"/><rect x="135" y="120" width="365" height="5" fill="url(#f9)"/><rect x="126" y="125" width="401" height="5" fill="url(#f10)"/><rect x="117" y="130" width="436" height="5" fill="url(#f11)"/><rect x="107" y="135" width="473" height="5" fill="url(#f12)"/><rect x="98" y="140" width="485" height="5" fill="url(#f13)"/><rect x="89" y="145" width="494" height="5" fill="url(#f14)"/><rect x="79" y="150" width="504" height="5" fill="url(#f15)"/><rect x="70" y="155" width="513" height="5" fill="url(#f16)"/><rect x="61" y="160" width="522" height="5" fill="url(#f17)"/><rect x="52" y="165" width="530" height="5" fill="url(#f18)"/><rect x="42" y="170" width="540" height="5" fill="url(#f19)"/><rect x="33" y="175" width="549" height="5" fill="url(#f20)"/><rect x="24" y="180" width="558" height="5" fill="url(#f21)"/><rect x="14" y="185" width="568" height="5" fill="url(#f22)"/><rect x="5" y="190" width="577" height="5" fill="url(#f23)"/><rect x="-4" y="195" width="586" height="5" fill="url(#f24)"/><rect x="-12" y="200" width="594" height="5" fill="url(#f25)"/><rect x="-12" y="205" width="594" height="5" fill="url(#f26)"/><rect x="-12" y="210" width="594" height="5" fill="url(#f27)"/><rect x="-12" y="215" width="594" height="5" fill="url(#f28)"/><rect x="-12" y="220" width="593" height="5" fill="url(#f29)"/><rect x="-12" y="225" width="593" height="5" fill="url(#f30)"/><rect x="-12" y="230" width="593" height="5" fill="url(#f31)"/><rect x="-12" y="235" width="593" height="5" fill="url(#f32)"/><rect x="-12" y="240" width="593" height="5" fill="url(#f33)"/><rect x="-12" y="245" width="593" height="5" fill="url(#f34)"/><rect x="-12" y="250" width="593" height="5" fill="url(#f35)"/><rect x="-12" y="255" width="593" height="5" fill="url(#f36)"/><rect x="-12" y="260" width="593" height="5" fill="url(#f37)"/><rect x="-12" y="265" width="593" height="5" fill="url(#f38)"/><rect x="-12" y="270" width="593" height="5" fill="url(#f39)"/><rect x="-12" y="275" width="592" height="5" fill="url(#f40)"/><rect x="-12" y="280" width="592" height="5" fill="url(#f41)"/><rect x="-12" y="285" width="592" height="5" fill="url(#f42)"/><rect x="-12" y="290" width="592" height="5" fill="url(#f43)"/><rect x="-12" y="295" width="592" height="5" fill="url(#f44)"/><rect x="-12" y="300" width="592" height="5" fill="url(#f45)"/><rect x="-12" y="305" width="592" height="5" fill="url(#f46)"/><rect x="-12" y="310" width="592" height="5" fill="url(#f47)"/><rect x="-12" y="315" width="592" height="5" fill="url(#f48)"/><rect x="-3" y="320" width="583" height="5" fill="url(#f49)"/><rect x="5" y="325" width="575" height="5" fill="url(#f50)"/><rect x="14" y="330" width="565" height="5" fill="url(#f51)"/><rect x="23" y="335" width="556" height="5" fill="url(#f52)"/><rect x="32" y="340" width="547" height="5" fill="url(#f53)"/><rect x="40" y="345" width="539" height="5" fill="url(#f54)"/><rect x="49" y="350" width="530" height="5" fill="url(#f55)"/><rect x="58" y="355" width="521" height="5" fill="url(#f56)"/><rect x="66" y="360" width="513" height="5" fill="url(#f57)"/><rect x="75" y="365" width="504" height="5" fill="url(#f58)"/><rect x="84" y="370" width="495" height="5" fill="url(#f59)"/></g>
  <!-- axes -->
  <line x1="123.1" y1="137.3" x2="265" y2="177.6" stroke="url(#zax)" stroke-width="1" stroke-dasharray="1.1 1.6"/>
  <line x1="288.2" y1="199.6" x2="123.5" y2="375.5" stroke="url(#xax)" stroke-width="0.95" stroke-dasharray="8.5 8.5"/>
  <!-- box -->
  <polygon points="264.7,150 289.7,129.8 333.7,140.5 311.3,161.9" fill="#0867a9"/>
  <polygon points="264.7,150 311.3,161.9 311,206.4 267,193.3" fill="#0974c2"/>
  <polygon points="311.3,161.9 333.7,140.5 331.5,182 311,206.4" fill="#044476"/>
  <rect x="298.8" y="0" width="1.5" height="144.5" fill="url(#yax)"/>
</svg>
</body>
</html>
